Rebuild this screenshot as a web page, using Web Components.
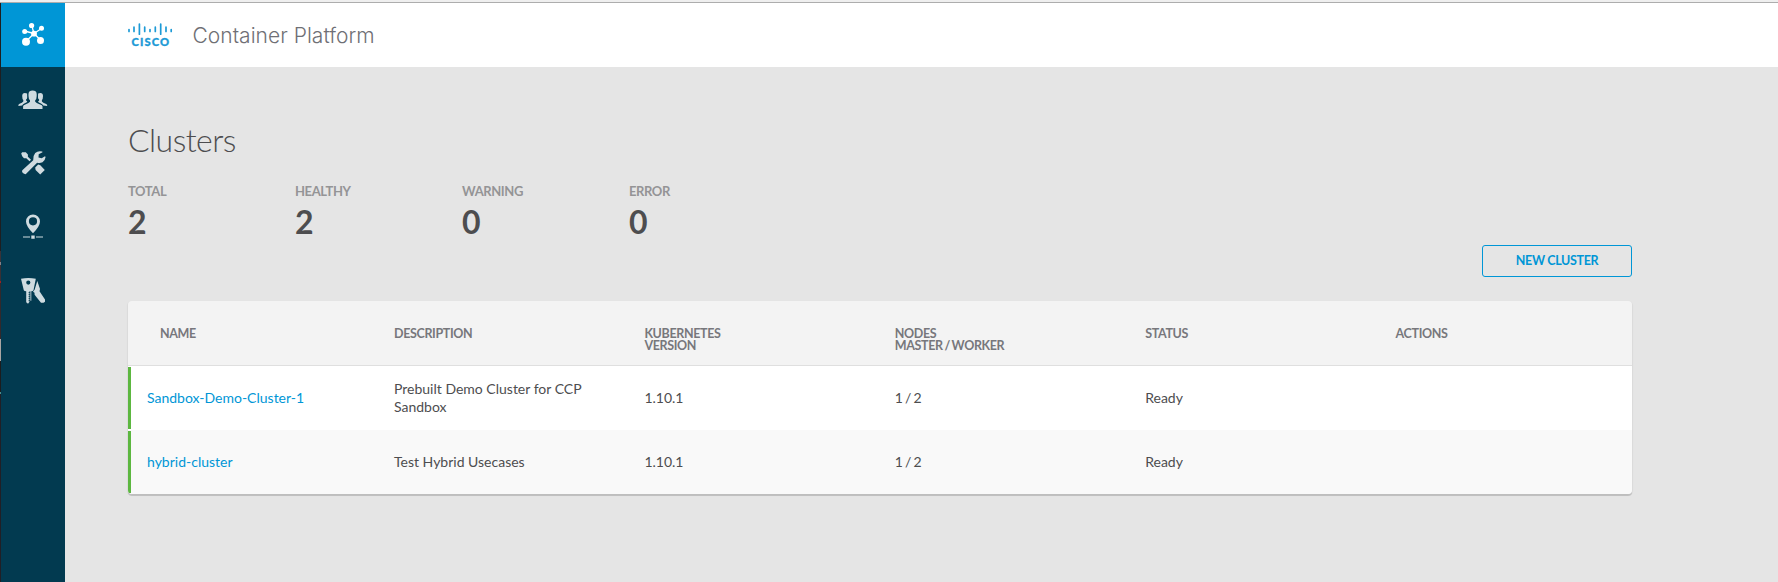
<!DOCTYPE html>
<html lang="en">
<head>
<meta charset="utf-8">
<title>Container Platform</title>
<style>
html,body{margin:0;height:100%}
body{overflow:hidden;background:#e5e5e5;font-family:Lato,"Liberation Sans",sans-serif;color:#4d4d4f}
</style>
</head>
<body>
<cp-app></cp-app>
<script>
const define = (name, html) => customElements.define(name, class extends HTMLElement {
  constructor() {
    super();
    const t = document.createElement('template');
    t.innerHTML = html;
    this.attachShadow({mode: 'open'}).append(t.content.cloneNode(true));
  }
});

define('cp-nav-item', `<style>
:host{display:flex;height:64px;width:64px;align-items:center;justify-content:center;color:#cfdbe0}
:host([active]){background:#0096d6;color:#fff}
</style><slot></slot>`);

define('cp-sidebar', `<style>
:host{display:flex;flex-direction:column;width:64px;background:#023a50}
svg{display:block;fill:currentColor}
</style>
<cp-nav-item active><svg width="32" height="32" viewBox="0 0 32 32">
<path d="M17 14.5 14.7 6.5M17 14.5 24.5 9.5M17 14.5 7.5 12M17 14.5 9 22.5M17 14.5 23.500 21" stroke="#fff" stroke-width="1.300"/>
<circle cx="17" cy="14.700" r="2.900"/><circle cx="14.600" cy="6.500" r="2.600"/><circle cx="24.500" cy="9.300" r="2.500"/><circle cx="7.700" cy="12.400" r="2.500"/><circle cx="9" cy="22.800" r="4"/><circle cx="23.500" cy="21.500" r="3.500"/>
</svg></cp-nav-item>
<cp-nav-item><svg width="32" height="32" viewBox="0.7 -1.4 32 32">
<path d="M6.800 24.500V21.800Q7 20.800 9 20 13 18.600 13.700 17.400V15.800Q12.200 14.500 12.200 11.500V9.500Q12.500 6.200 16.300 6.200T20.400 9.500V11.500Q20.400 14.500 18.900 15.800V17.400Q19.600 18.600 23.800 20 26 20.800 26.200 21.800V24.500Z"/>
<path d="M10.800 9.200Q9.900 8.500 8.500 8.500 5.900 8.700 5.900 11.500 5.900 14.500 7 15.500V17.200Q6 18.500 3.300 19.300 2 19.800 2 21.500L5.800 21Q6.500 19.800 8.500 18.800 10.500 18 11 17L9.800 16V15.200Q10.900 14.500 10.900 13Z"/>
<path d="M21.800 9.200Q22.700 8.500 24.100 8.500 26.700 8.700 26.700 11.500 26.700 14.500 25.600 15.500V17.200Q26.600 18.500 29.300 19.300 31 19.800 31 21.500L26.900 21Q26.200 19.800 24.200 18.800 22.200 18 21.700 17L22.800 16V15.200Q21.700 14.500 21.700 13Z"/>
</svg></cp-nav-item>
<cp-nav-item><svg width="32" height="32" viewBox="0 -1 32 32">
<path d="M5.200 4.200 8.800 4.300 10.900 6.600V8.700L14 11.700 12.500 13.200 9.300 10.200H7L5.200 8.200 4.200 5.500ZM18.200 19.400 21.200 16.400 23.300 17.300 27.800 22 23.200 26.600 18.600 22Z"/>
<path d="M5.300 22.300 16.200 12.200Q15.900 7.700 18.200 5 21 2.400 25.300 3.500L25.500 4.200 21.700 6.300 21.500 9.400 24.700 10.200 28 8.300 28.600 8.900Q28 12.800 25.500 14.300 22.800 15.500 20.100 14.700L8.900 26.100Q7.800 26.500 5.800 25.100 4.500 23.500 5.300 22.300Z"/>
</svg></cp-nav-item>
<cp-nav-item><svg width="32" height="32" viewBox="0 0.3 32 32">
<path fill-rule="evenodd" d="M16 22.500Q9 15.300 9 10.700A7 7 0 0 1 23 10.700Q23 15.300 16 22.500ZM16 6.500A4.100 4.100 0 1 0 16 14.700 4.100 4.100 0 1 0 16 6.500Z"/>
<path d="M6 25.800H13V26.800H6ZM19 25.800H26V26.800H19ZM14.300 24.700H17.700V28H14.300Z"/>
</svg></cp-nav-item>
<cp-nav-item><svg width="32" height="32" viewBox="0 0.8 32 32">
<path fill-rule="evenodd" d="M4 4.500Q11.300 3 18.800 4.500L16.500 16Q16 16.800 14.300 17V26.500H13.400V17H12.500V27.500L11 29.500 9.200 28V17Q7.300 17 6.800 16ZM11.300 6.300A2.100 2.100 0 1 0 11.300 10.500 2.100 2.100 0 1 0 11.300 6.300Z"/>
<path d="M11.600 18.500h1.500M11.600 20.500h1.500M11.600 22.500h1.500M11.600 24.500h1.500M11.600 26.500h1.500" stroke="#023a50"/>
<path d="M20.300 6.800 23 14.900 22.500 17 28 25.200V27.500L26.500 28.500H24L17.600 20.600 17.500 18.500 16 17.500 17.600 15.500Z"/>
</svg></cp-nav-item>`);

define('cp-header', `<style>
:host{display:flex;height:64px;background:#fff;padding-left:62px;align-items:center}
svg{display:block;flex:none}
.t{font:300 21px/24px Inter,sans-serif;color:#6f6f75;margin:1px 0 0 17.500px;letter-spacing:.03px;white-space:nowrap}
</style>
<svg width="48" height="28" viewBox="0 3 48 28">
<g stroke="#1d9ad6" stroke-width="1.700" stroke-linecap="round">
<path d="M2 11.600V13.400M7 9.200V13.400M12.400 6V16.200M17.700 9.200V13.400M23 11.600V13.400M28.300 9.200V13.400M33.700 6V16.200M39 9.200V13.400M44.200 11.600V13.400"/></g>
<text x="4.500" y="27.700" textLength="37.500" lengthAdjust="spacing" font-family="Lato,sans-serif" font-weight="900" font-size="11.200" fill="#1d9ad6" stroke="#1d9ad6" stroke-width=".3">CISCO</text>
</svg><span class="t">Container Platform</span>`);

define('cp-stat', `<style>
:host{display:block;width:167px}
.l{font:700 13px/16px Lato,sans-serif;letter-spacing:-.4px;color:#949496}
.v{font:700 32px/40px Lato,sans-serif;color:#4d4d4f;margin-top:3px}
</style><div class="l"><slot name="label"></slot></div><div class="v"><slot></slot></div>`);

define('cp-button', `<style>
:host{display:flex;box-sizing:border-box;width:150px;height:32px;border:1px solid #0096d6;border-radius:3px;align-items:center;justify-content:center;color:#0096d6;font:700 12.500px/16px Lato,sans-serif;letter-spacing:-.35px;padding-bottom:1px}
</style><slot></slot>`);

define('cp-head', `<style>
:host{display:grid;grid-template-columns:250px repeat(5,250.400px);box-sizing:border-box;height:65px;background:#f3f3f3;border-bottom:1px solid #dfdfdf;font:700 12.500px/12px Lato,sans-serif;letter-spacing:-.35px;word-spacing:-1px;color:#77777c;padding-top:27px}
span{padding-left:16px}.n{padding-left:32px}
</style><span class="n">NAME</span><span>DESCRIPTION</span><span>KUBERNETES<br>VERSION</span><span>NODES<br>MASTER / WORKER</span><span>STATUS</span><span>ACTIONS</span>`);

define('cp-row', `<style>
:host{display:grid;grid-template-columns:250px repeat(5,250.400px);height:64px;align-items:center;font:400 14px/18px Lato,sans-serif;color:#4d4d4f;background:#fff}
:host([alt]){background:#f9f9f9}
div{padding:0 16px}
.n{display:flex;align-items:center;box-sizing:border-box;height:62px;border-left:3px solid #5cb740;color:#0096d6}
.w{word-spacing:-1.500px}
</style><div class="n"><slot name="name"></slot></div><div><slot name="desc"></slot></div><div><slot name="ver"></slot></div><div class="w"><slot name="nodes"></slot></div><div><slot name="status"></slot></div><div></div>`);

define('cp-table', `<style>
:host{display:block;border-radius:4px;overflow:hidden;box-shadow:0 1px 1px 1px rgba(0,0,0,.05),0 2px 0 rgba(0,0,0,.12)}
</style><cp-head></cp-head><slot></slot>`);

define('cp-clusters', `<style>
:host{display:block;padding:53px 0 0 63px;width:1504px}
h1{margin:0;font:300 32px/40px Lato,sans-serif;letter-spacing:-.55px;color:#4d4d4f}
.stats{display:flex;margin-top:23px}
.bar{display:flex;justify-content:flex-end;margin:3px 0 24px}
</style>
<h1>Clusters</h1>
<div class="stats">
<cp-stat><span slot="label">TOTAL</span>2</cp-stat><cp-stat><span slot="label">HEALTHY</span>2</cp-stat><cp-stat><span slot="label">WARNING</span>0</cp-stat><cp-stat><span slot="label">ERROR</span>0</cp-stat>
</div>
<div class="bar"><cp-button>NEW CLUSTER</cp-button></div>
<cp-table>
<cp-row><span slot="name">Sandbox-Demo-Cluster-1</span><span slot="desc">Prebuilt Demo Cluster for CCP Sandbox</span><span slot="ver">1.10.1</span><span slot="nodes">1 / 2</span><span slot="status">Ready</span></cp-row>
<cp-row alt><span slot="name">hybrid-cluster</span><span slot="desc">Test Hybrid Usecases</span><span slot="ver">1.10.1</span><span slot="nodes">1 / 2</span><span slot="status">Ready</span></cp-row>
</cp-table>`);

define('cp-app', `<style>
:host{display:flex;flex-direction:column;height:100vh}
.top{height:2px;flex:none;background:#efefef;border-bottom:1px solid #adadad}
.main{flex:1;display:flex;min-height:0}
.edge{width:1px;background:linear-gradient(#1e1e20 248px,#3a3338 248px 259px,#858088 259px 262px,#3a3034 262px 278px,#a02020 278px 280px,#33292c 280px 336px,#aaa5a3 336px 358px,#1c1c1e 358px 389px,#4c8d8c 389px 391px,#211f26 391px)}
.body{flex:1;min-width:0}
</style>
<div class="top"></div>
<div class="main"><div class="edge"></div><cp-sidebar></cp-sidebar><div class="body"><cp-header></cp-header><cp-clusters></cp-clusters></div></div>`);
</script>
</body>
</html>
